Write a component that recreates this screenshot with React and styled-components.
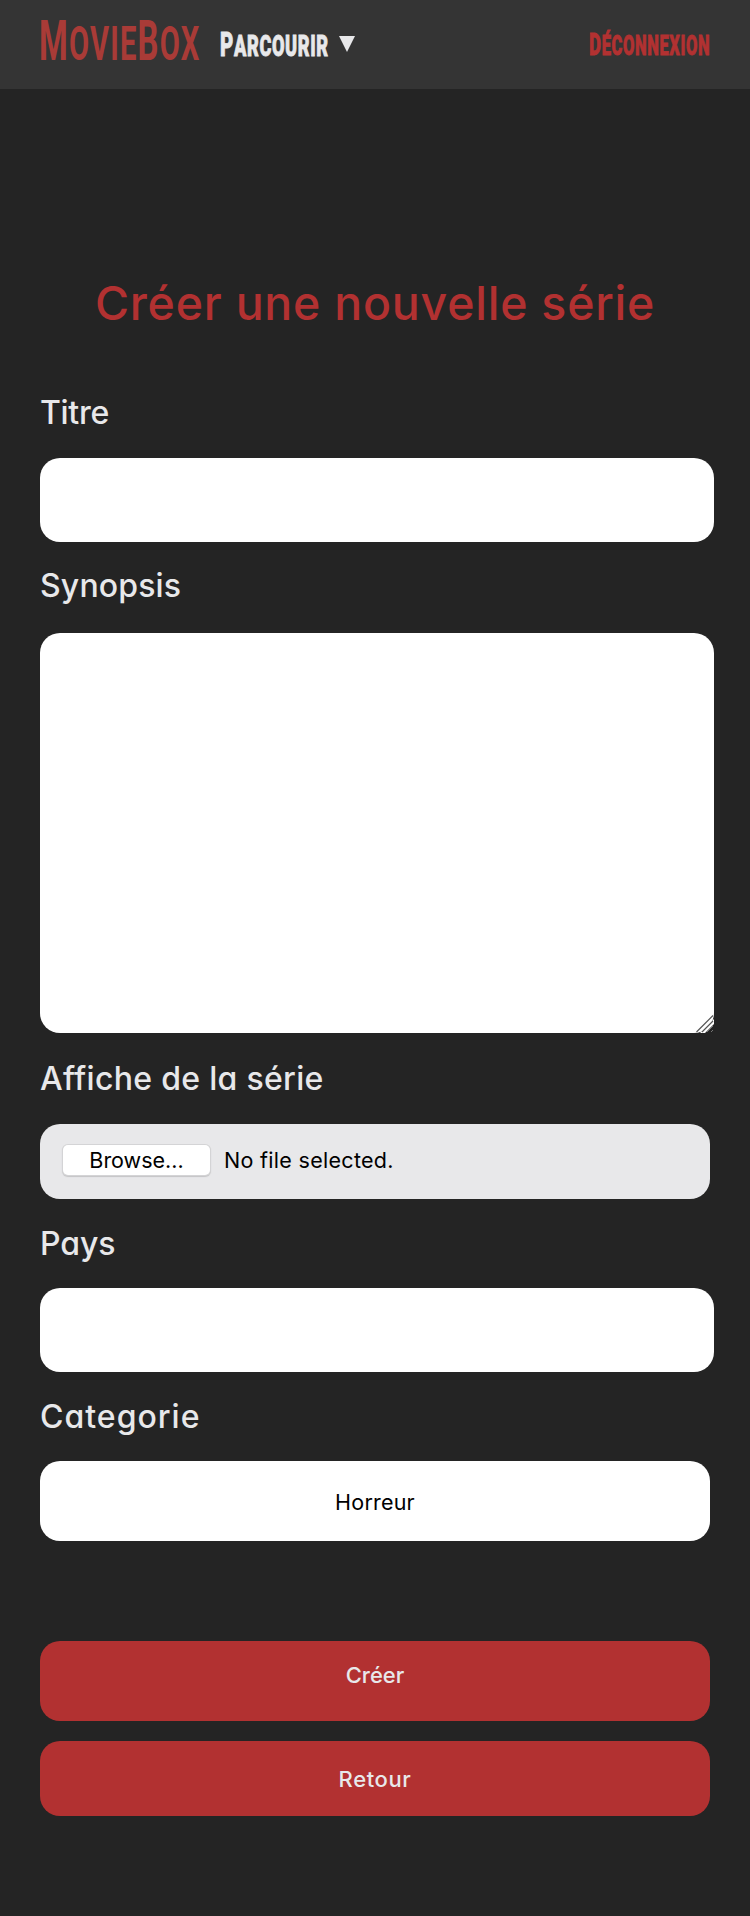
import React from 'react';
import styled, { createGlobalStyle } from 'styled-components';

const GlobalStyle = createGlobalStyle`
  *, *::before, *::after { box-sizing: border-box; }
  body {
    margin: 0;
    background: #242424;
    color: #e8e8ea;
    font-family: Inter, "Liberation Sans", sans-serif;
  }
`;

const Page = styled.div`
  min-height: 1916px;
  background: #242424;
`;

const Header = styled.header`
  display: flex;
  align-items: flex-start;
  height: 89px;
  padding: 0 40px 0 39px;
  background: #343434;
`;

const Slot = styled.div`
  width: ${(p) => p.$width}px;
  height: 89px;
  margin-left: ${(p) => p.$left || '0'};
  padding-top: ${(p) => p.$top}px;
  overflow: hidden;
  white-space: nowrap;
`;

const Condensed = styled.a`
  display: block;
  width: max-content;
  font-family: Roboto, sans-serif;
  font-size: ${(p) => p.$size}px;
  font-weight: ${(p) => p.$weight};
  line-height: 1;
  letter-spacing: ${(p) => p.$spacing || 0}px;
  color: ${(p) => p.$color};
  -webkit-text-stroke: ${(p) => p.$stroke || 0}px ${(p) => p.$color};
  transform: scaleX(${(p) => p.$scale});
  transform-origin: left center;
`;

const Small = styled.span`
  font-size: 0.89em;
  text-transform: uppercase;
`;

const Arrow = styled.svg`
  display: block;
  margin: 36px 0 0 8px;
`;

const Form = styled.form`
  display: flex;
  flex-direction: column;
  padding: 182px 36px 0 40px;
`;

const Title = styled.h1`
  margin: 0 4px 52px 0;
  height: 66px;
  line-height: 65px;
  text-align: center;
  font-size: 46.5px;
  font-weight: 500;
  letter-spacing: 0.75px;
  white-space: nowrap;
  color: #b23131;
  font-feature-settings: "cv11";
`;

const Label = styled.label`
  height: 48px;
  margin: ${(p) => p.$top}px 0 ${(p) => p.$bottom}px;
  line-height: 48px;
  font-size: 32px;
  font-weight: 450;
  letter-spacing: ${(p) => p.$spacing || 0}px;
  font-feature-settings: "cv11";
`;

const TextInput = styled.input`
  height: 84px;
  width: 100%;
  padding: 20px;
  border: 0;
  border-radius: 20px;
  background: #fff;
  font: 22px Inter, sans-serif;
`;

const TextAreaBox = styled.div`
  position: relative;
  height: 400px;
`;

const TextArea = styled.textarea`
  display: block;
  width: 100%;
  height: 100%;
  padding: 20px;
  border: 0;
  border-radius: 20px;
  resize: none;
  font: 22px Inter, sans-serif;
`;

const Grip = styled.svg`
  position: absolute;
  right: 0;
  bottom: 0;
`;

const FileField = styled.div`
  display: flex;
  align-items: flex-start;
  height: 75px;
  margin-right: 4px;
  padding: 21px 23px;
  border-radius: 20px;
  background: #e8e8ea;
  color: #000;
  font-size: 21.5px;
  line-height: 31px;
  letter-spacing: 0.3px;
`;

const Browse = styled.button`
  width: 147px;
  height: 30px;
  margin-right: 14px;
  padding: 0;
  border: 0;
  border-radius: 5px;
  background: #fff;
  box-shadow: 0 0 0 1px #d4d4d6, 0 1px 1px 1px #c4c4c6;
  color: #000;
  font: 21.5px/29px Inter, sans-serif;
`;

const Select = styled.select`
  appearance: none;
  height: 80px;
  margin-right: 4px;
  border: 0;
  border-radius: 20px;
  background: #fff;
  color: #000;
  text-align: center;
  text-align-last: center;
  font: 21.5px Inter, sans-serif;
  letter-spacing: 0.2px;
  padding: 2px 0 0;
`;

const Action = styled.button`
  height: ${(p) => p.$height}px;
  margin: ${(p) => p.$top}px 4px 0 0;
  padding: 0 0 ${(p) => p.$lift || 0}px;
  border: 0;
  border-radius: 20px;
  background: #b23131;
  color: #e8e8ea;
  font: 500 22px Inter, sans-serif;
  letter-spacing: ${(p) => p.$spacing || 0}px;
`;

export default function App() {
  return (
    <Page>
      <GlobalStyle />
      <Header>
        <Slot $width={181} $top={14}>
          <Condensed $size={55} $weight={700} $scale={0.597} $spacing={2} $color="#a93b37">
            M<Small>ovie</Small>B<Small>ox</Small>
          </Condensed>
        </Slot>
        <Slot $width={111} $top={28}>
          <Condensed $size={33.5} $weight={900} $scale={0.61} $spacing={1} $stroke={0.8} $color="#e8e8ea">
            P<Small>arcourir</Small>
          </Condensed>
        </Slot>
        <Arrow width="16" height="16" viewBox="0 0 16 16">
          <path d="M0 0H16L8 16Z" fill="#e8e8ea" />
        </Arrow>
        <Slot $width={121} $top={29} $left="auto">
          <Condensed $size={31} $weight={900} $scale={0.6} $spacing={1} $stroke={0.8} $color="#b23131">
            D<Small>éconnexion</Small>
          </Condensed>
        </Slot>
      </Header>
      <Form>
        <Title>Créer une nouvelle série</Title>
        <Label htmlFor="titre" $top={0} $bottom={21} $spacing={-0.3}>Titre</Label>
        <TextInput id="titre" />
        <Label htmlFor="synopsis" $top={20} $bottom={23} $spacing={0.15}>Synopsis</Label>
        <TextAreaBox>
          <TextArea id="synopsis" />
          <Grip width="18" height="18" viewBox="0 0 18 18">
            <path d="M18 3V18H4Q14 16 18 3Z" fill="#242424" />
            <path d="M4 18L18 4V9L9 18Z" fill="#fff" />
            <path d="M0.5 17L17 0.5M6 17L17 6" stroke="#555" strokeWidth="1.2" />
            <path d="M11 17L17 11M15 17L17 15" stroke="#777" strokeWidth="1" />
          </Grip>
        </TextAreaBox>
        <Label as="div" $top={22} $bottom={21} $spacing={0.3}>Affiche de la série</Label>
        <FileField>
          <Browse type="button">Browse...</Browse>
          No file selected.
        </FileField>
        <Label htmlFor="pays" $top={21} $bottom={20} $spacing={-0.1}>Pays</Label>
        <TextInput id="pays" />
        <Label htmlFor="categorie" $top={21} $bottom={20} $spacing={1}>Categorie</Label>
        <Select id="categorie">
          <option>Horreur</option>
        </Select>
        <Action type="button" $height={80} $top={100} $lift={12}>Créer</Action>
        <Action type="button" $height={75} $top={20} $spacing={0.6}>Retour</Action>
      </Form>
    </Page>
  );
}
